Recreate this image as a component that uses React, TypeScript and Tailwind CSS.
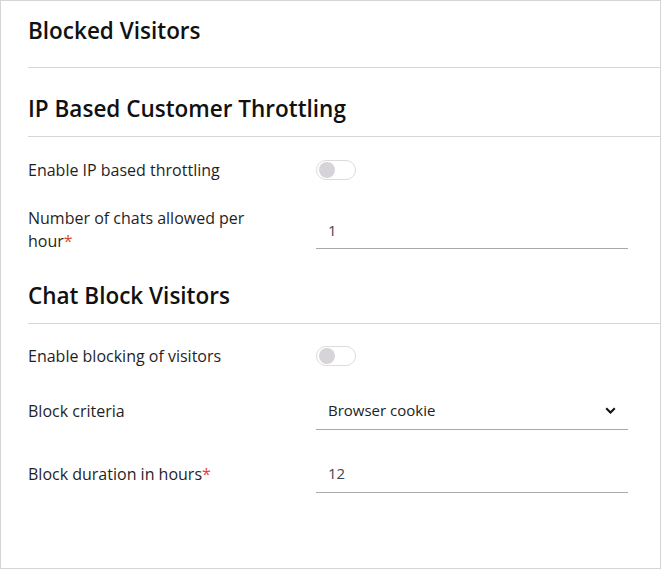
import React from 'react'

const FONT = { fontFamily: '"Open Sans", "Noto Sans", sans-serif' }

function Toggle() {
  return (
    <div className="w-[40px] h-[20px] rounded-full border border-[#dcdcdc] bg-white flex items-center px-[2px]">
      <div className="w-[16px] h-[16px] rounded-full bg-[#d6d4d8]" />
    </div>
  )
}

function Req() {
  return <span className="text-[#e0452b]">*</span>
}

export default function App() {
  return (
    <div style={FONT} className="w-[661px] h-[569px] border border-[#d4d4d4] bg-white text-[#1f1f1f] pl-[27px] overflow-hidden">
      <h1 className="pt-[15px] text-[22.5px] leading-[30px] font-semibold text-[#111]">Blocked Visitors</h1>
      <div className="mt-[21px] border-b border-[#d6d6d6]" />

      <h2 className="mt-[26px] text-[22.5px] leading-[30px] font-semibold text-[#111]">IP Based Customer Throttling</h2>
      <div className="mt-[12px] border-b border-[#d6d6d6]" />

      <div className="mt-[23px] flex items-center">
        <div className="w-[288px] text-[16px] leading-[20px]">Enable IP based throttling</div>
        <Toggle />
      </div>

      <div className="mt-[27px] flex items-start">
        <div className="w-[288px] pr-[36px] text-[16px] leading-[23px]">
          Number of chats allowed per hour<Req />
        </div>
        <div className="mt-[4px] w-[312px] h-[38px] pt-[2px] pl-3 flex items-center border-b border-[#a8a8a8] text-[15px] text-[#4a4458]">1</div>
      </div>

      <h2 className="mt-[28px] text-[22.5px] leading-[30px] font-semibold text-[#111]">Chat Block Visitors</h2>
      <div className="mt-[12px] border-b border-[#d6d6d6]" />

      <div className="mt-[22px] flex items-center">
        <div className="w-[288px] text-[16px] leading-[20px]">Enable blocking of visitors</div>
        <Toggle />
      </div>

      <div className="mt-[26px] flex items-center">
        <div className="w-[288px] text-[16px] leading-[20px]">Block criteria</div>
        <div className="w-[312px] h-[38px] pl-3 pr-[12px] flex items-center justify-between border-b border-[#a8a8a8] text-[15px] text-[#222]">
          <span>Browser cookie</span>
          <svg width="11" height="7" viewBox="0 0 11 7" fill="none">
            <path d="M1.2 1.2L5.5 5.5L9.8 1.2" stroke="#111" strokeWidth="2" />
          </svg>
        </div>
      </div>

      <div className="mt-[25px] flex items-center">
        <div className="w-[288px] text-[16px] leading-[20px]">
          Block duration in hours<Req />
        </div>
        <div className="w-[312px] h-[38px] pl-3 flex items-center border-b border-[#a8a8a8] text-[15px] text-[#4a4458]">12</div>
      </div>
    </div>
  )
}
